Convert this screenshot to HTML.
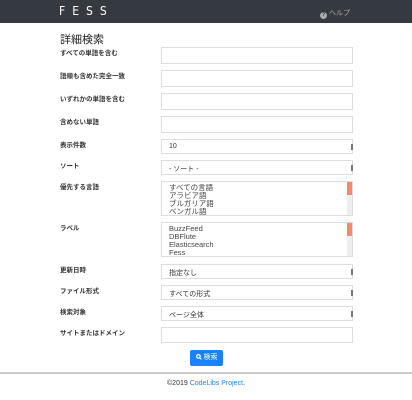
<!DOCTYPE html>
<html><head><meta charset="utf-8"><style>
*{box-sizing:border-box;margin:0;padding:0}
body{width:412px;height:400px;background:#fff;font-family:"Liberation Sans","Noto Sans CJK JP",sans-serif;position:relative;overflow:hidden;color:#333}
.hdr{position:absolute;left:0;top:0;width:412px;height:23px;background:#343a40}
.logo{position:absolute;left:59px;top:4px;color:#fff;font-size:12px;letter-spacing:7px;font-family:"DejaVu Sans Condensed","Liberation Sans",sans-serif}
.help{position:absolute;left:320px;top:8px;color:#aaa;font-size:7px}
.help b{display:inline-block;width:7px;height:7px;border-radius:50%;background:#aaa;color:#343a40;font-size:5px;text-align:center;line-height:7px;vertical-align:-1px}
h1{position:absolute;left:60px;top:31px;font-size:11px;font-weight:normal;color:#222}
.l{position:absolute;left:60px;font-size:6.5px;color:#333;font-weight:bold}
.i{position:absolute;left:161px;width:192px;border:1px solid #ddd;background:#fff}
.s{font-size:7px;padding:3px 7px;color:#333}
.s:after{content:"";position:absolute;right:-1px;top:4px;width:2px;height:6px;background:#777}
.lst{font-size:7.5px;line-height:8px;padding:2px 7px;color:#444;overflow:hidden}
.sb{position:absolute;right:0;top:0;width:5px;height:100%;background:#eee}
.sb:before{content:"";position:absolute;left:0;top:0;width:5px;height:13px;background:#ef8a6b}
.btn{position:absolute;left:190px;top:350px;width:33px;height:16px;background:#1a82ff;border-radius:2px;color:#fff;font-size:7px;text-align:center;line-height:16px}
.ft{position:absolute;left:0;top:372px;width:412px;height:2px;background:#ccc}
.fx{position:absolute;left:0;top:380px;width:412px;text-align:center;font-size:7px;color:#333}
.fx span{color:#1a82ff}
</style></head><body>
<div class="hdr"><div class="logo">FESS</div><div class="help"><b>?</b> ヘルプ</div></div>
<h1>詳細検索</h1>
<div class="l" style="top:47px">すべての単語を含む</div><div class="i" style="top:47px;height:17px"></div>
<div class="l" style="top:70px">語順も含めた完全一致</div><div class="i" style="top:70px;height:17px"></div>
<div class="l" style="top:93px">いずれかの単語を含む</div><div class="i" style="top:93px;height:17px"></div>
<div class="l" style="top:116px">含めない単語</div><div class="i" style="top:116px;height:17px"></div>
<div class="l" style="top:139px">表示件数</div><div class="i s" style="top:139px;height:15px">10</div>
<div class="l" style="top:160px">ソート</div><div class="i s" style="top:160px;height:15px">- ソート -</div>
<div class="l" style="top:181px">優先する言語</div><div class="i lst" style="top:181px;height:35px">すべての言語<br>アラビア語<br>ブルガリア語<br>ベンガル語<br>カタロニア語<div class="sb"></div></div>
<div class="l" style="top:222px">ラベル</div><div class="i lst" style="top:222px;height:35px">BuzzFeed<br>DBFlute<br>Elasticsearch<br>Fess<br>Geo Ranking<div class="sb"></div></div>
<div class="l" style="top:264px">更新日時</div><div class="i s" style="top:264px;height:15px">指定なし</div>
<div class="l" style="top:285px">ファイル形式</div><div class="i s" style="top:285px;height:15px">すべての形式</div>
<div class="l" style="top:306px">検索対象</div><div class="i s" style="top:306px;height:15px">ページ全体</div>
<div class="l" style="top:327px">サイトまたはドメイン</div><div class="i" style="top:327px;height:16px"></div>
<div class="btn"><svg width="6" height="6" viewBox="0 0 10 10" style="vertical-align:-1px"><circle cx="4" cy="4" r="3" fill="none" stroke="#fff" stroke-width="2"/><path d="M6 6L9 9" stroke="#fff" stroke-width="2"/></svg> 検索</div>
<div class="ft"></div>
<div class="fx">©2019 <span>CodeLibs Project</span>.</div>
</body></html>
